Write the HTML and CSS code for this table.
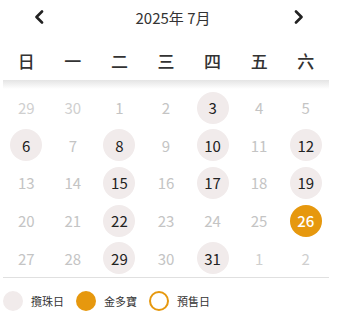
FILE: index.html
```html
<!DOCTYPE html>
<html lang="zh-Hant">
<head>
  <meta charset="UTF-8">
  <title>行事曆</title>
  <link rel="stylesheet" href="styles.css">
</head>
<body>

  <div class="calendar">
    <div class="cal-header">
      <button class="nav-btn prev" aria-label="上個月">
        <svg width="10" height="14" viewBox="0 0 10 14"><path d="M8 1.5 L2.5 7 L8 12.5" fill="none" stroke="#222" stroke-width="2.6" stroke-linecap="round" stroke-linejoin="round"/></svg>
      </button>
      <div class="cal-title">2025年 7月</div>
      <button class="nav-btn next" aria-label="下個月">
        <svg width="10" height="14" viewBox="0 0 10 14"><path d="M2 1.5 L7.5 7 L2 12.5" fill="none" stroke="#222" stroke-width="2.6" stroke-linecap="round" stroke-linejoin="round"/></svg>
      </button>
    </div>

    <div class="weekdays">
      <span>日</span><span>一</span><span>二</span><span>三</span><span>四</span><span>五</span><span>六</span>
    </div>
    <div class="divider-shadow"></div>

    <div class="days" id="days"></div>

    <div class="legend">
      <span class="dot pearl"></span><span class="legend-label">攬珠日</span>
      <span class="dot gold"></span><span class="legend-label">金多寶</span>
      <span class="dot presale"></span><span class="legend-label">預售日</span>
    </div>
  </div>

  <script>
    // 2025/7 starts on a Tuesday; show the tail of June and start of August
    const cells = [
      [29, "out"], [30, "out"], [1], [2], [3, "pearl"], [4], [5],
      [6, "pearl"], [7], [8, "pearl"], [9], [10, "pearl"], [11], [12, "pearl"],
      [13], [14], [15, "pearl"], [16], [17, "pearl"], [18], [19, "pearl"],
      [20], [21], [22, "pearl"], [23], [24], [25], [26, "gold"],
      [27], [28], [29, "pearl"], [30], [31, "pearl"], [1, "out"], [2, "out"]
    ];

    const daysEl = document.getElementById("days");
    cells.forEach(cell => {
      const d = document.createElement("div");
      d.classList.add("day");
      const n = document.createElement("span");
      n.classList.add("num");
      if (cell[1]) n.classList.add(cell[1]);
      n.textContent = cell[0];
      d.appendChild(n);
      daysEl.appendChild(d);
    });
  </script>

</body>
</html>
```

FILE: styles.css
```css
body {
  margin: 0;
  background-color: #fff;
  font-family: "Noto Sans CJK TC", "Noto Sans", sans-serif;
  color: #222;
}
.calendar {
  width: 326px;
  margin-left: 3px;
}
.cal-header {
  display: flex;
  align-items: center;
  height: 34px;
}
.nav-btn {
  display: flex;
  align-items: center;
  justify-content: center;
  width: 20px;
  height: 20px;
  padding: 0;
  border: none;
  background: none;
  cursor: pointer;
}
.nav-btn.prev {
  margin-left: 26px;
}
.nav-btn.next {
  margin-right: 20px;
}
.cal-title {
  flex: 1;
  text-align: center;
  font-size: 15px;
  color: #333;
  padding-left: 8px;
}
.weekdays {
  display: grid;
  grid-template-columns: repeat(7, 1fr);
  height: 40px;
  margin-top: 6px;
  align-items: center;
  text-align: center;
  font-size: 17px;
  font-weight: 500;
  color: #333;
}
.divider-shadow {
  height: 9px;
  background: linear-gradient(#e4e4e4, #fff);
}
.days {
  display: grid;
  grid-template-columns: repeat(7, 1fr);
  grid-auto-rows: 37.6px;
  border-bottom: 1px solid #e0e0e0;
}
.day {
  display: flex;
  align-items: center;
  justify-content: center;
}
.num {
  display: flex;
  align-items: center;
  justify-content: center;
  width: 32px;
  height: 32px;
  border-radius: 50%;
  font-size: 15px;
  color: #c4c4c4;
}
.num.out {
  color: #cfcfcf;
}
.num.pearl {
  background-color: #f1ebeb;
  color: #222;
}
.num.gold {
  background-color: #e6980e;
  color: #fff;
  font-weight: 500;
}
.legend {
  display: flex;
  align-items: center;
  height: 46px;
  font-size: 11px;
  color: #333;
}
.dot {
  width: 20px;
  height: 20px;
  border-radius: 50%;
  box-sizing: border-box;
}
.dot.pearl {
  background-color: #f1ebeb;
}
.dot.gold {
  background-color: #e6980e;
}
.dot.presale {
  border: 2px solid #e6980e;
}
.legend-label {
  margin-left: 8px;
  margin-right: 12px;
}
```
